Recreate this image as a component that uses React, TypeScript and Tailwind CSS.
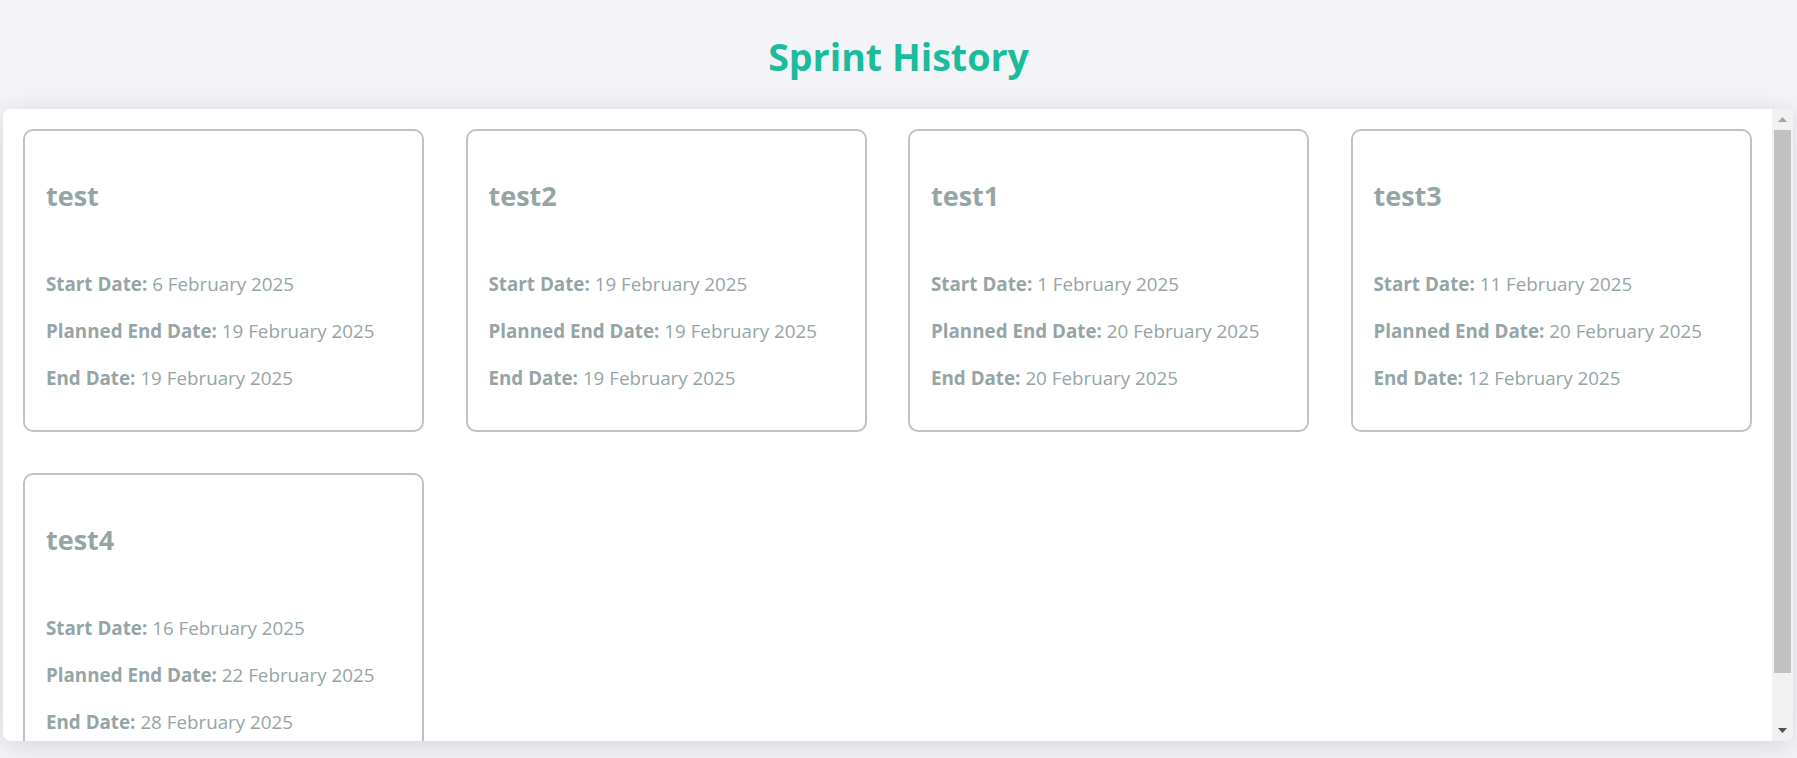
import React from "react";

const sprints = [
  { name: "test", start: "6 February 2025", planned: "19 February 2025", end: "19 February 2025" },
  { name: "test2", start: "19 February 2025", planned: "19 February 2025", end: "19 February 2025" },
  { name: "test1", start: "1 February 2025", planned: "20 February 2025", end: "20 February 2025" },
  { name: "test3", start: "11 February 2025", planned: "20 February 2025", end: "12 February 2025" },
  { name: "test4", start: "16 February 2025", planned: "22 February 2025", end: "28 February 2025" },
];

function Row({ label, value }: { label: string; value: string }) {
  return (
    <div className="leading-[27px] text-[18.8px] whitespace-nowrap">
      <span className="font-bold">{label}</span> {value}
    </div>
  );
}

function Card({ s }: { s: (typeof sprints)[number] }) {
  return (
    <div className="border-2 border-[#bdc3c7] rounded-[10px] px-[21px] pt-[45px] pb-[38px] text-[#95a5a6] h-[303px] shrink-0">
      <div className="text-[27px] font-bold leading-[40px]">{s.name}</div>
      <div className="mt-[55px] flex flex-col gap-[20px]">
        <Row label="Start Date:" value={s.start} />
        <Row label="Planned End Date:" value={s.planned} />
        <Row label="End Date:" value={s.end} />
      </div>
    </div>
  );
}

export default function App() {
  return (
    <div className="w-[1797px] h-[758px] overflow-hidden bg-[#f4f4f8] font-['Open_Sans',sans-serif]">
      <h1 className="text-center text-[#1abc9c] font-bold text-[37.6px] leading-[48px] pt-[33px] pb-[28px]">
        Sprint History
      </h1>
      <div className="ml-[3px] mr-[4px] h-[632px] bg-white rounded-[8px] shadow-[0_4px_28px_rgba(0,0,0,0.13)] flex overflow-hidden">
        <div className="flex-1 overflow-hidden pl-[20px] pt-[20px] grid grid-cols-[repeat(4,401px)] gap-x-[41.5px] gap-y-[41px] content-start">
          {sprints.map((s) => (
            <Card key={s.name} s={s} />
          ))}
        </div>
        <div className="w-[21px] bg-[#f1f1f1] flex flex-col">
          <div className="h-[21px] flex items-center justify-center">
            <svg width="9" height="5" viewBox="0 0 9 5">
              <polygon points="0,5 9,5 4.5,0" fill="#a3a3a3" />
            </svg>
          </div>
          <div className="mx-[2px] h-[543px] bg-[#c1c1c1]" />
          <div className="flex-1" />
          <div className="h-[21px] flex items-center justify-center">
            <svg width="9" height="5" viewBox="0 0 9 5">
              <polygon points="0,0 9,0 4.5,5" fill="#505050" />
            </svg>
          </div>
        </div>
      </div>
    </div>
  );
}
